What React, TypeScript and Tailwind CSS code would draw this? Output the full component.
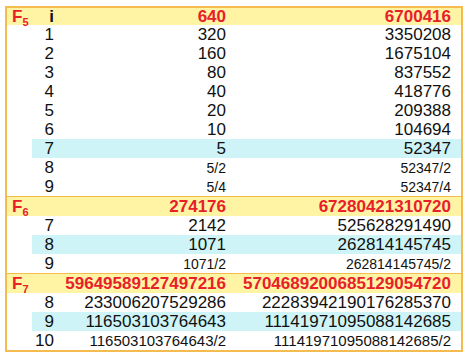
import React from "react";

type Row = { i: string; a: string; b: string; hl?: boolean; sa?: boolean; sb?: boolean; big?: boolean };
type Section = { n: string; a: string; b: string; showI?: boolean; rows: Row[] };

const sections: Section[] = [
  {
    n: "5",
    a: "640",
    b: "6700416",
    showI: true,
    rows: [
      { i: "1", a: "320", b: "3350208" },
      { i: "2", a: "160", b: "1675104" },
      { i: "3", a: "80", b: "837552" },
      { i: "4", a: "40", b: "418776" },
      { i: "5", a: "20", b: "209388" },
      { i: "6", a: "10", b: "104694" },
      { i: "7", a: "5", b: "52347", hl: true },
      { i: "8", a: "5/2", b: "52347/2", sa: true, sb: true },
      { i: "9", a: "5/4", b: "52347/4", sa: true, sb: true },
    ],
  },
  {
    n: "6",
    a: "274176",
    b: "67280421310720",
    rows: [
      { i: "7", a: "2142", b: "525628291490" },
      { i: "8", a: "1071", b: "262814145745", hl: true },
      { i: "9", a: "1071/2", b: "262814145745/2", sa: true, sb: true },
    ],
  },
  {
    n: "7",
    a: "59649589127497216",
    b: "5704689200685129054720",
    rows: [
      { i: "8", a: "233006207529286", b: "22283942190176285370" },
      { i: "9", a: "116503103764643", b: "11141971095088142685", hl: true },
      { i: "10", a: "116503103764643/2", b: "11141971095088142685/2", sa: true, sb: true, big: true },
    ],
  },
];

export default function App() {
  return (
    <div className="w-[467px] h-[360px] bg-white pt-[6px] pl-[5px]" style={{ fontFamily: '"Liberation Sans", Arial, sans-serif' }}>
      <div className="w-[458px] border-2 border-[#f4bb4e] flex flex-col">
        {sections.map((s, si) => (
          <div key={si} className={si > 0 ? "border-t border-[#f4bb4e]" : ""}>
            <div
              className={`grid grid-cols-[25px_24px_172px_1fr] ${si === 0 ? "h-[17px]" : "h-[19px]"} items-center bg-[#fff4a4] text-[17px] leading-none font-bold`}
            >
              <div className="pl-[5px] text-[#e8202a] flex items-end">
                F<span className="text-[11px] translate-y-[3px]">{s.n}</span>
              </div>
              <div className="text-right pr-[2px] text-[#111]">{s.showI ? "i" : ""}</div>
              <div className="text-right pr-[2px] text-[#e8202a]">{s.a}</div>
              <div className="text-right pr-[10px] text-[#e8202a]">{s.b}</div>
            </div>
            {s.rows.map((r, ri) => (
              <div key={ri} className="grid grid-cols-[25px_24px_172px_1fr] h-[19px] items-center text-[#111] leading-none">
                <div className="h-full bg-white" />
                <div className={`h-full flex items-center justify-end pr-[2px] text-[17px] ${r.hl ? "bg-[#cff4f7]" : ""}`}>{r.i}</div>
                <div
                  className={`h-full flex items-center justify-end pr-[2px] ${r.sa ? (r.big ? "text-[15px]" : "text-[14px]") : "text-[17px]"} ${r.hl ? "bg-[#cff4f7]" : ""}`}
                >
                  {r.a}
                </div>
                <div
                  className={`h-full flex items-center justify-end pr-[10px] ${r.sb ? (r.big ? "text-[15px]" : "text-[14px]") : "text-[17px]"} ${r.hl ? "bg-[#cff4f7]" : ""}`}
                >
                  {r.b}
                </div>
              </div>
            ))}
          </div>
        ))}
      </div>
    </div>
  );
}
